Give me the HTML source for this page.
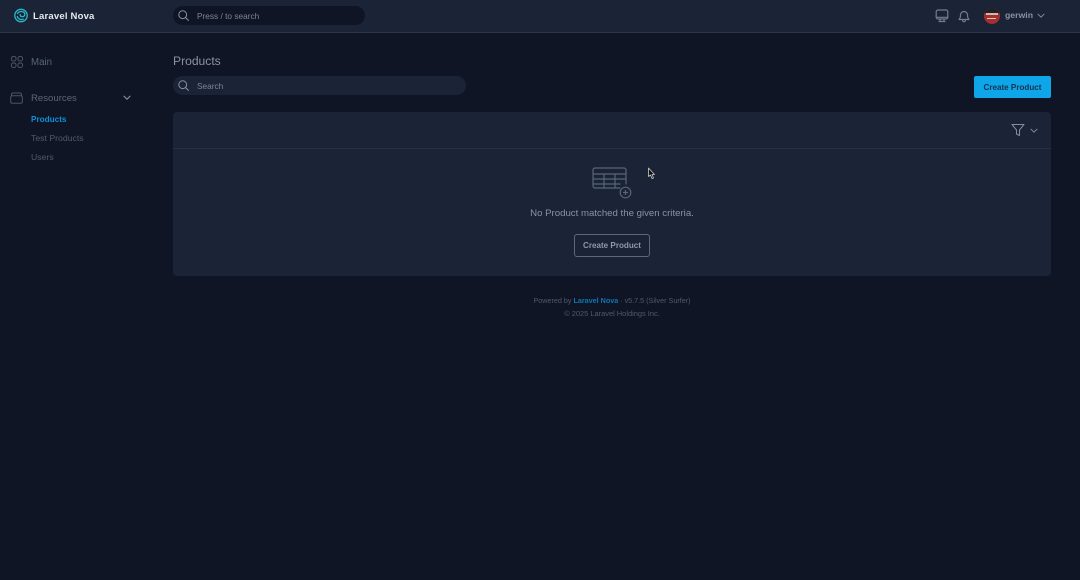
<!DOCTYPE html>
<html><head><meta charset="utf-8"><style>
*{box-sizing:border-box}
html,body{margin:0;padding:0;width:1080px;height:580px;overflow:hidden;background:#0f1525;font-family:"Liberation Sans",sans-serif}
.a{position:absolute;white-space:nowrap}
svg{position:absolute;fill:none;stroke-linecap:round;stroke-linejoin:round}
</style></head><body>
<div class="a" style="left:0;top:0;width:1080px;height:33px;background:#1a2436;border-bottom:1px solid #2c3648"></div>
<svg style="left:14px;top:8px" width="14" height="15" viewBox="0 0 14 15" stroke="#2bb8c8" stroke-width="1.300"><circle cx="7" cy="7.500" r="6.200"/><path d="M3.500 5.500C5 3 9 2.800 10.500 5c1 1.600 0 3.500-1.800 3.700C7 8.900 5.800 7.800 6.200 6.500"/><path d="M3.300 8.500c.6 2.500 3.500 3.700 6 2.700"/></svg>
<div class="a" style="left:33px;top:10px;font-size:9.500px;line-height:13px;font-weight:700;color:#e6e9ee;letter-spacing:.2px">Laravel Nova</div>
<div class="a" style="left:173px;top:6px;width:192px;height:19px;border-radius:10px;background:#0f1525"></div>
<svg style="left:178px;top:10px" width="11" height="11" viewBox="0 0 11 11" stroke="#8a93a3" stroke-width="1"><circle cx="4.700" cy="4.700" r="3.900"/><path d="M7.600 7.600 10.400 10.400"/></svg>
<div class="a" style="left:197px;top:10px;font-size:8.300px;line-height:12px;color:#7d8696">Press / to search</div>
<svg style="left:935px;top:9px" width="14" height="14" viewBox="0 0 14 14" stroke="#737c8d" stroke-width="1.200"><rect x="1.200" y="1" width="11.600" height="9" rx="1.800"/><path d="M1.200 8.300H12.800M5 10v2.500M9 10v2.500M4 12.500h6"/></svg>
<svg style="left:957px;top:9px" width="14" height="14" viewBox="0 0 14 14" stroke="#737c8d" stroke-width="1.200"><path d="M2 10.500c1-1 1.500-2 1.500-4.500a3.500 3.500 0 0 1 7 0c0 2.500.5 3.500 1.500 4.500zM5.500 10.500c0 3 3 3 3 0"/></svg>
<div class="a" style="left:984px;top:8px;width:16px;height:16px;border-radius:50%;overflow:hidden;background:#a52e2e">
  <div class="a" style="left:0;top:0;width:16px;height:5px;background:#241f24"></div>
  <div class="a" style="left:2px;top:5px;width:12px;height:2px;background:#c9b8b4"></div>
  <div class="a" style="left:3px;top:10px;width:9px;height:1px;background:#d9c5c0"></div>
</div>
<div class="a" style="left:1005px;top:9px;font-size:8.700px;line-height:13px;font-weight:700;color:#8a93a3">gerwin</div>
<svg style="left:1037px;top:13px" width="8" height="6" viewBox="0 0 8 6" stroke="#858e9e" stroke-width="1"><path d="M1 1.200 4 4.200 7 1.200"/></svg>
<svg style="left:11px;top:56px" width="12" height="12" viewBox="0 0 12 12" stroke="#4a5567" stroke-width="1"><rect x=".5" y=".5" width="4.500" height="4.500" rx="1.800"/><rect x="7" y=".5" width="4.500" height="4.500" rx="1.800"/><rect x=".5" y="7" width="4.500" height="4.500" rx="1.800"/><rect x="7" y="7" width="4.500" height="4.500" rx="1.800"/></svg>
<div class="a" style="left:31px;top:56px;font-size:9.700px;line-height:14px;color:#5b6577">Main</div>
<svg style="left:10px;top:91px" width="13" height="13" viewBox="0 0 13 13" stroke="#4a5567" stroke-width="1"><rect x=".7" y="4.700" width="11.600" height="7.600" rx="1.500"/><path d="M1.500 4.700V3.500a1.500 1.500 0 0 1 1.500-1.500h7a1.500 1.500 0 0 1 1.500 1.500v1.200"/></svg>
<div class="a" style="left:31px;top:92px;font-size:9.600px;line-height:14px;color:#5b6577">Resources</div>
<svg style="left:123px;top:95px" width="8" height="6" viewBox="0 0 8 6" stroke="#7d8696" stroke-width="1.200"><path d="M1 1.200 4 4.200 7 1.200"/></svg>
<div class="a" style="left:31px;top:114px;font-size:8.200px;line-height:12px;font-weight:700;color:#0f8fd6">Products</div>
<div class="a" style="left:31px;top:132px;font-size:8.700px;line-height:13px;color:#505a6c">Test Products</div>
<div class="a" style="left:31px;top:151px;font-size:8.700px;line-height:13px;color:#505a6c">Users</div>
<div class="a" style="left:173px;top:53px;font-size:12.100px;line-height:17px;color:#8a93a3">Products</div>
<div class="a" style="left:173px;top:76px;width:293px;height:19px;border-radius:10px;background:#1a2436"></div>
<svg style="left:178px;top:80px" width="11" height="11" viewBox="0 0 11 11" stroke="#8a93a3" stroke-width="1"><circle cx="4.700" cy="4.700" r="3.900"/><path d="M7.600 7.600 10.400 10.400"/></svg>
<div class="a" style="left:197px;top:80px;font-size:8.300px;line-height:12px;color:#7d8696">Search</div>
<div class="a" style="left:974px;top:76px;width:77px;height:22px;border-radius:2px;background:#0ea5e9;color:#12334f;font-size:8.100px;font-weight:700;line-height:23px;text-align:center">Create Product</div>
<div class="a" style="left:173px;top:112px;width:878px;height:164px;border-radius:4px;background:#1a2436"></div>
<div class="a" style="left:173px;top:148px;width:878px;height:1px;background:#253041"></div>
<svg style="left:1011px;top:123px" width="14" height="14" viewBox="0 0 14 14" stroke="#858e9e" stroke-width="1"><path d="M1 1.500H13L8.500 7V12.500L5.500 11V7z"/></svg>
<svg style="left:1030px;top:128px" width="8" height="6" viewBox="0 0 8 6" stroke="#858e9e" stroke-width="1"><path d="M1 1.200 4 4.200 7 1.200"/></svg>
<svg style="left:592px;top:167px" width="41" height="32" viewBox="0 0 41 32" stroke="#596478" stroke-width="1.200"><path d="M28 21H3a2 2 0 0 1-2-2V3a2 2 0 0 1 2-2H32a2 2 0 0 1 2 2v14"/><path d="M1 7H34M1 12H34M1 17H28M12 7V21M23 7V21"/><circle cx="33.500" cy="25.500" r="5.300"/><path d="M33.500 23.500v4M31.500 25.500h4"/></svg>
<svg style="left:647px;top:167px" width="9" height="13" viewBox="0 0 9 13"><path d="M1.500 1 1.500 9.500 3.500 8 5 11.500 6.500 11 5 7.500 7.500 7.500z" fill="#111" stroke="#ccc" stroke-width=".8"/></svg>
<div class="a" style="left:512px;width:200px;top:207px;font-size:9.650px;line-height:14px;color:#8a93a3;text-align:center">No Product matched the given criteria.</div>
<div class="a" style="left:574px;top:234px;width:76px;height:23px;border:1.500px solid #5d687c;border-radius:3px;color:#8f98a8;font-size:8.100px;font-weight:700;line-height:21px;text-align:center">Create Product</div>
<div class="a" style="left:412px;width:400px;top:295px;font-size:7.200px;line-height:12px;color:#4f596b;text-align:center">Powered by <b style="color:#0f77b5">Laravel Nova</b> · v5.7.5 (Silver Surfer)</div>
<div class="a" style="left:412px;width:400px;top:308px;font-size:7.450px;line-height:12px;color:#4f596b;text-align:center">© 2025 Laravel Holdings Inc.</div>
</body></html>
